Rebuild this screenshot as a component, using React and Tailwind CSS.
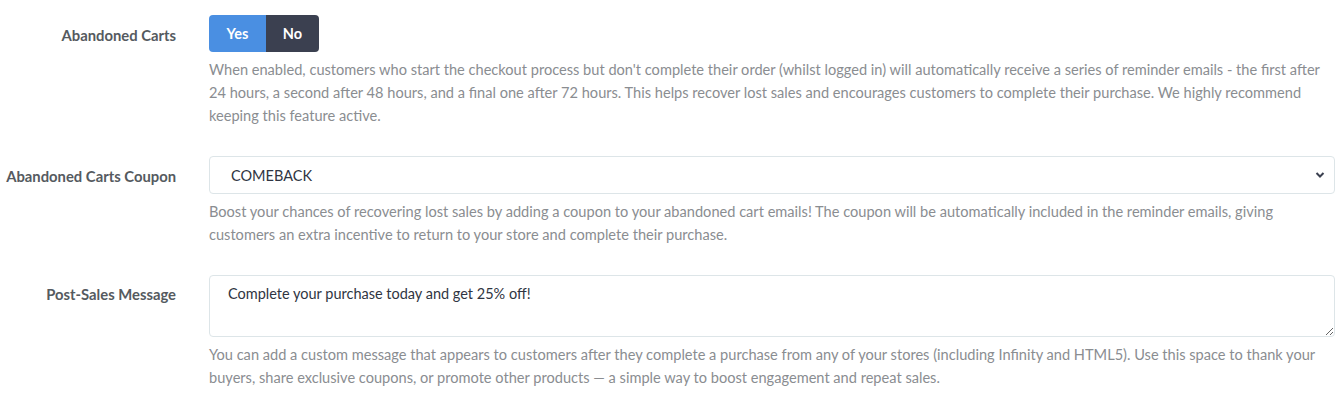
import React, { useState } from 'react';

const font = { fontFamily: '"Source Sans Pro", Lato, "Liberation Sans", sans-serif' };

const Row = ({ label, labelClass = 'pt-[9px]', children, help }) => (
  <div className="flex gap-[33px]">
    <div className={`w-[176px] shrink-0 text-right text-[14.8px] font-bold text-[#555a60] ${labelClass}`}>
      {label}
    </div>
    <div className="flex-1 min-w-0 pr-[8px]">
      {children}
      <p className="mt-[6px] text-[14.6px] leading-[23px] text-[#8a8d91]">{help}</p>
    </div>
  </div>
);

const App = () => {
  const [enabled, setEnabled] = useState(true);
  const [message, setMessage] = useState('Complete your purchase today and get 25% off!');

  return (
    <div className="bg-white w-[1343px] h-[417px] pt-[15px]" style={font}>
      <div className="flex flex-col gap-[29px]">
        <Row
          label="Abandoned Carts"
          help="When enabled, customers who start the checkout process but don't complete their order (whilst logged in) will automatically receive a series of reminder emails - the first after 24 hours, a second after 48 hours, and a final one after 72 hours. This helps recover lost sales and encourages customers to complete their purchase. We highly recommend keeping this feature active."
        >
          <div className="flex w-[110px] h-[37px] rounded-[4px] overflow-hidden text-[14.5px] font-bold text-white">
            <button
              onClick={() => setEnabled(true)}
              className={`w-[57px] ${enabled ? 'bg-[#4a8fe2]' : 'bg-[#3b4050]'}`}
            >
              Yes
            </button>
            <button
              onClick={() => setEnabled(false)}
              className={`flex-1 ${enabled ? 'bg-[#3b4050]' : 'bg-[#4a8fe2]'}`}
            >
              No
            </button>
          </div>
        </Row>

        <Row
          label="Abandoned Carts Coupon"
          help="Boost your chances of recovering lost sales by adding a coupon to your abandoned cart emails! The coupon will be automatically included in the reminder emails, giving customers an extra incentive to return to your store and complete their purchase."
        >
          <div className="relative h-[38px] border border-[#dde5e8] rounded-[4px] flex items-center pl-[21px] pt-[1px] text-[14.5px] text-[#2f3542]">
            COMEBACK
            <svg className="absolute right-[9px] top-[14px]" width="10" height="8" viewBox="0 0 10 8">
              <path d="M1.5 2 L5 5.5 L8.5 2" fill="none" stroke="#3b4050" strokeWidth="2" />
            </svg>
          </div>
        </Row>

        <Row
          label="Post-Sales Message"
          labelClass="pt-[8px]"
          help="You can add a custom message that appears to customers after they complete a purchase from any of your stores (including Infinity and HTML5). Use this space to thank your buyers, share exclusive coupons, or promote other products — a simple way to boost engagement and repeat sales."
        >
          <textarea
            value={message}
            onChange={(e) => setMessage(e.target.value)}
            className="block w-full h-[62px] border border-[#dde5e8] rounded-[4px] px-[18px] py-[8px] text-[14.5px] leading-[20px] text-[#2f3542] outline-none"
            style={font}
          />
        </Row>
      </div>
    </div>
  );
};

export default App;
